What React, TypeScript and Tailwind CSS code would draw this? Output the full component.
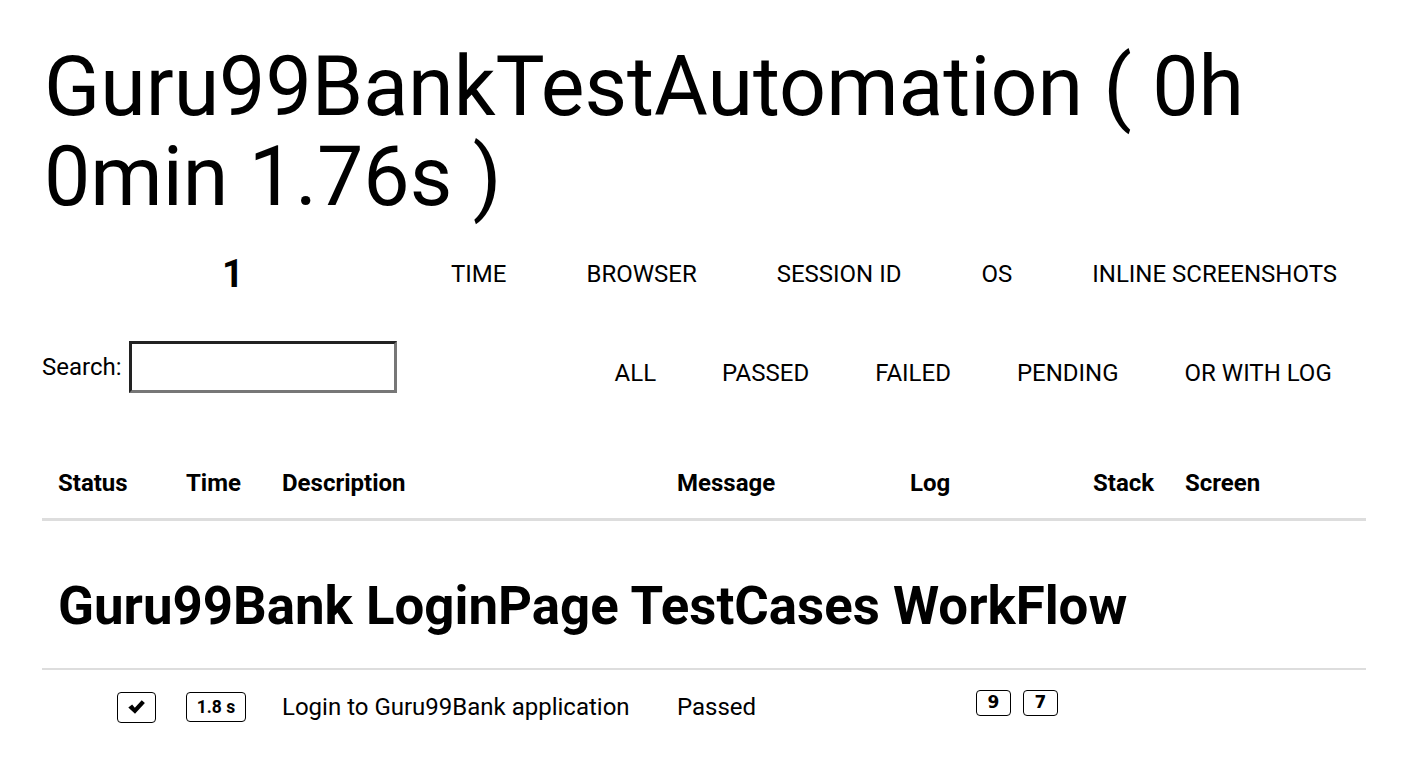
const topItems = ["TIME", "BROWSER", "SESSION ID", "OS", "INLINE SCREENSHOTS"];
const filters = ["ALL", "PASSED", "FAILED", "PENDING", "OR WITH LOG"];
const columns = ["Status", "Time", "Description", "Message", "Log", "Stack", "Screen"];

const gridCols = "grid grid-cols-[128px_96px_395px_233px_183px_92px_1fr]";

// heavy check mark, like ✔
const CheckMark = () => (
  <svg width="17" height="14" viewBox="0 0 16 13">
    <path d="M0.3 7 L3.9 4.2 L6.4 7.1 L12.9 0.2 L15.9 2.8 L6.6 12.8 Z" fill="black" />
  </svg>
);

export default function App() {
  return (
    <div className="min-h-screen bg-white text-black font-['Roboto',sans-serif]">
      <div className="w-[1324px] ml-[42px]">
        {/* report title */}
        <h1 className="pt-[42px] pl-[2px] text-[82.5px] leading-[90px] font-normal">
          Guru99BankTestAutomation ( 0h 0min 1.76s )
        </h1>

        {/* summary row */}
        <div className="mt-[30px] flex items-center h-[44px]">
          <span className="w-[409px] pl-[180px] text-[38px] font-bold">1</span>
          <div className="flex gap-[80px] text-[24px]">
            {topItems.map((item) => (
              <span key={item}>{item}</span>
            ))}
          </div>
        </div>

        {/* search + filters */}
        <div className="mt-[45px] flex items-center h-[52px]">
          <label className="flex items-center gap-[7px] text-[24px]">
            Search:
            <input
              type="text"
              className="w-[268px] h-[52px] border-[3px] border-t-[#222] border-l-[#222] border-r-[#777] border-b-[#777] outline-none"
            />
          </label>
          <div className="ml-[218px] mt-[12px] flex gap-[66px] text-[24px]">
            {filters.map((f) => (
              <span key={f}>{f}</span>
            ))}
          </div>
        </div>

        {/* table header */}
        <div className={`${gridCols} mt-[76px] pb-[21px] border-b-[3px] border-[#ddd] text-[24px] leading-[28px] font-bold`}>
          {columns.map((c) => (
            <span key={c} className="pl-[16px]">
              {c}
            </span>
          ))}
        </div>

        {/* suite heading */}
        <h2 className="pl-[16px] pt-[55px] pb-[32px] border-b-[2px] border-[#ddd] text-[52.8px] leading-[60px] font-bold">
          Guru99Bank LoginPage TestCases WorkFlow
        </h2>

        {/* test row */}
        <div className={`${gridCols} items-center mt-[19px] text-[24px]`}>
          <div className="pl-[75px]">
            <span className="flex items-center justify-center w-[39px] h-[31px] border-[1.5px] border-black rounded-[4px]">
              <CheckMark />
            </span>
          </div>
          <div className="pl-[16px]">
            <span className="flex items-center justify-center w-[60px] h-[30px] border-[1.5px] border-black rounded-[4px] text-[17.5px] font-bold">
              1.8 s
            </span>
          </div>
          <span className="pl-[16px]">Login to Guru99Bank application</span>
          <span className="pl-[16px]">Passed</span>
          <div className="pl-[82px] flex gap-[12px] -mt-[8px]">
            <span className="flex items-center justify-center w-[35px] h-[26px] border-[1.5px] border-black rounded-[4px] font-['DejaVu_Sans',sans-serif] text-[17px] font-bold">
              9
            </span>
            <span className="flex items-center justify-center w-[35px] h-[26px] border-[1.5px] border-black rounded-[4px] font-['DejaVu_Sans',sans-serif] text-[17px] font-bold">
              7
            </span>
          </div>
          <span />
          <span />
        </div>
      </div>
    </div>
  );
}
